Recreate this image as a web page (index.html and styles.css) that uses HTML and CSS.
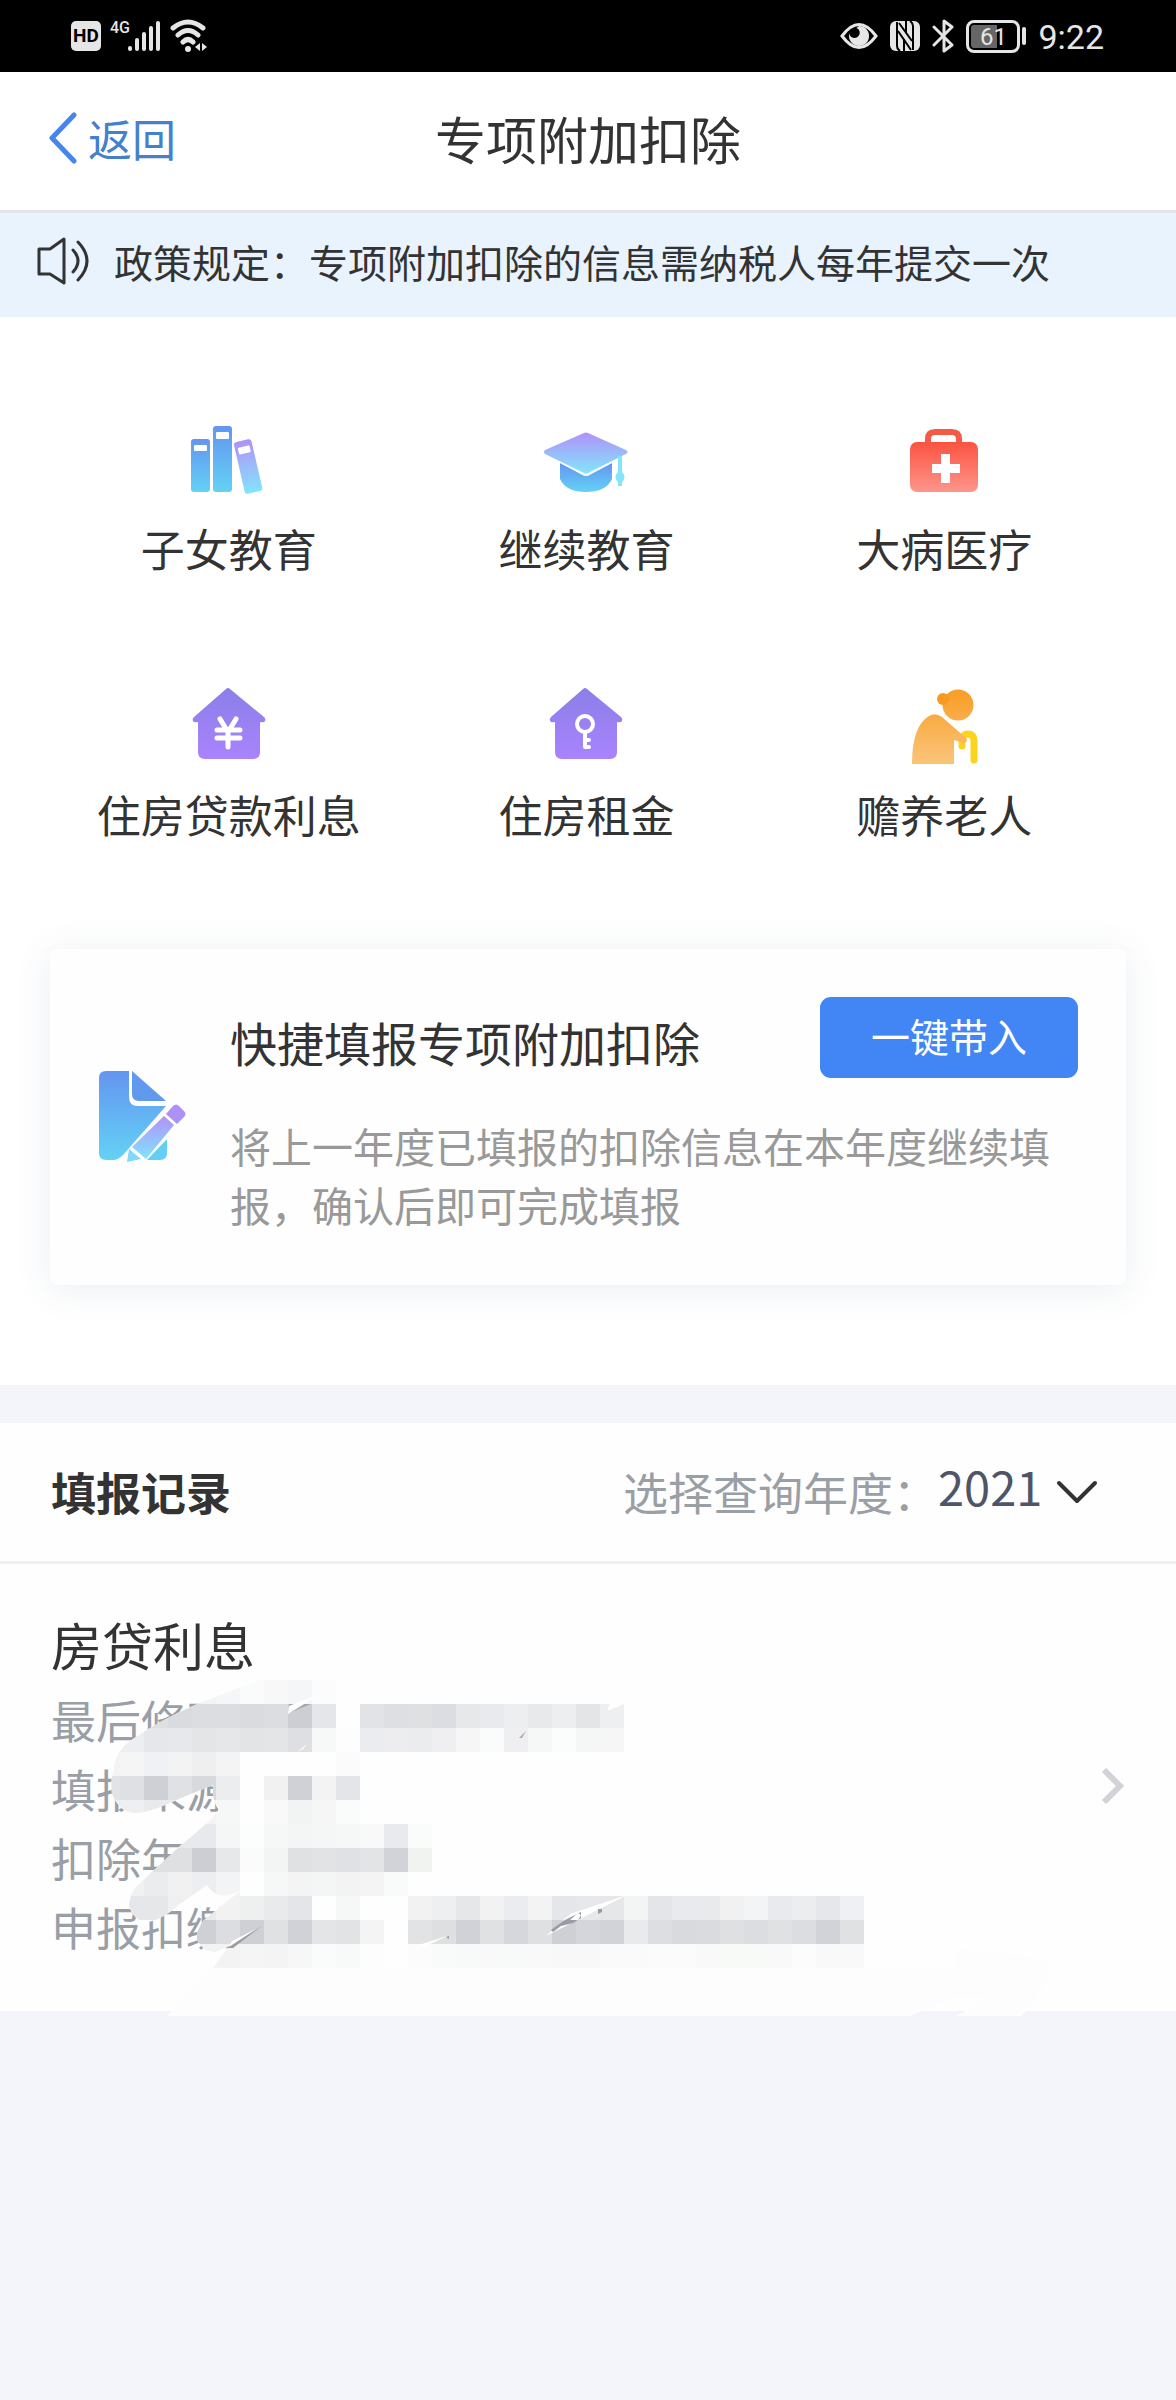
FILE: index.html
```html
<!DOCTYPE html>
<html lang="zh-CN">
<head>
<meta charset="utf-8">
<meta name="viewport" content="width=device-width, initial-scale=1">
<title>专项附加扣除</title>
<link rel="stylesheet" href="styles.css">
</head>
<body>
<div class="status">
  <div class="status-left">
    <span class="hd">HD</span>
    <span class="net">4G</span>
    <svg class="signal" width="34" height="32" viewBox="0 0 34 32" stroke="#e6e6e6" stroke-width="4" stroke-linecap="round"><path d="M3 28v1M10 20v9M17 14v15M24 8v21M31 3v26"/></svg>
    <svg width="38" height="34" viewBox="0 0 38 34" fill="none" stroke="#e6e6e6" stroke-width="5" stroke-linecap="round"><path d="M3 9Q18-3 33 9M8 16Q18 7 28 16M13 23Q18 18 23 23"/><circle cx="18" cy="30" r="3" fill="#e6e6e6" stroke="none"/><path d="M25 28l5-4v8zM37 28l-5-4v8z" fill="#e6e6e6" stroke="none"/></svg>
  </div>
  <div class="status-right">
    <svg width="38" height="28" viewBox="0 0 38 28"><path d="M2 14Q19-9 36 14Q19 37 2 14z" fill="none" stroke="#e6e6e6" stroke-width="3"/><path d="M19 4a10 10 0 1 1-9.500 7a5 5 0 0 0 9 3a5 5 0 0 0-2-8z" fill="#e6e6e6"/></svg>
    <svg width="30" height="30" viewBox="0 0 30 30"><rect width="30" height="30" rx="6" fill="#e6e6e6"/><path d="M7 1v24q0 3 3 5M8 10l13 19M9 2l13 18M23 29V5q0-3-3-5" fill="none" stroke="#000" stroke-width="2"/><path d="M14 18v12M16 0v12" stroke="#000" stroke-width="2"/></svg>
    <svg width="22" height="34" viewBox="0 0 22 34" fill="none" stroke="#e6e6e6" stroke-width="3" stroke-linejoin="round" stroke-linecap="round"><path d="M2 8l18 18-8 6V2l8 6L2 26"/></svg>
    <span class="battery"><span class="battery-box">61</span><span class="battery-tip"></span></span>
    <span class="clock">9:22</span>
  </div>
</div>

<header class="topbar">
  <a class="back" href="#">
    <svg width="28" height="52" viewBox="0 0 28 52" fill="none" stroke="#4585ec" stroke-width="5" stroke-linecap="round" stroke-linejoin="round"><path d="M25 3L3 26l22 23"/></svg>
    <span>返回</span>
  </a>
  <h1>专项附加扣除</h1>
</header>

<p class="notice">
  <svg width="52" height="48" viewBox="0 0 52 48" fill="none" stroke="#333" stroke-width="3" stroke-linejoin="round" stroke-linecap="round"><path d="M2 12h11L27 2v44L13 37H2zM36 13q10 11 0 22M41 5q18 19 0 38"/></svg>
  <span>政策规定：专项附加扣除的信息需纳税人每年提交一次</span>
</p>

<main>
  <section class="panel">
    <nav class="grid">
      <a href="#">
        <svg width="84" height="84" viewBox="0 0 84 84">
          <defs>
            <linearGradient id="blue" x1="0" y1="0" x2="0" y2="1"><stop offset="0" stop-color="#6495f0"/><stop offset="1" stop-color="#63d2f5"/></linearGradient>
            <linearGradient id="violet" x1="0" y1="0" x2="0" y2="1"><stop offset="0" stop-color="#b092f8"/><stop offset="1" stop-color="#82e4fd"/></linearGradient>
            <linearGradient id="purple" x1="0" y1="0" x2="0" y2="1"><stop offset="0" stop-color="#8b7fe8"/><stop offset="1" stop-color="#a983fd"/></linearGradient>
            <linearGradient id="red" x1="0" y1="0" x2="0" y2="1"><stop offset="0" stop-color="#fb5340"/><stop offset="1" stop-color="#fe958c"/></linearGradient>
            <linearGradient id="orange" x1="0" y1="0" x2="0" y2="75" gradientUnits="userSpaceOnUse"><stop offset="0" stop-color="#f99a1f"/><stop offset="1" stop-color="#fac274"/></linearGradient>
          </defs>
          <rect x="4" y="21" width="19" height="53" rx="3" fill="url(#blue)"/>
          <rect x="26" y="8" width="19" height="66" rx="3" fill="url(#blue)"/>
          <g transform="rotate(-13 61 48)"><rect x="52" y="22" width="18" height="53" rx="3" fill="url(#violet)"/><rect x="55" y="28" width="12" height="7" rx="1" fill="#fff"/></g>
          <rect x="7" y="27" width="13" height="6" rx="1" fill="#fff"/><rect x="29" y="14" width="13" height="7" rx="1" fill="#fff"/>
        </svg>
        <span>子女教育</span>
      </a>
      <a href="#">
        <svg width="84" height="84" viewBox="0 0 84 84">
          <path d="M16 45l26 13 26-13v16q-6 13-26 13T16 61z" fill="url(#blue)"/>
          <path d="M42 56L68 42" stroke="#fff" stroke-width="5"/><path d="M42 56L16 42" stroke="#fff" stroke-width="5"/>
          <path d="M40 15q2-1 4 0l38 17q3 2 0 4L44 55q-2 1-4 0L1 36q-2-2 0-4z" fill="url(#violet)"/>
          <path d="M74 38h4v16q5 5 0 10v4h-4v-4q-5-5 0-10z" fill="#82e4fd"/>
        </svg>
        <span>继续教育</span>
      </a>
      <a href="#">
        <svg width="84" height="84" viewBox="0 0 84 84">
          <path d="M26 26v-5q0-7 7-7h17q7 0 7 7v5" fill="none" stroke="#f45a48" stroke-width="6"/>
          <rect x="8" y="24" width="68" height="50" rx="7" fill="url(#red)"/>
          <path d="M39 36h9v10h10v9H48v10h-9V55H30v-9h9z" fill="#fff"/>
        </svg>
        <span>大病医疗</span>
      </a>
      <a href="#">
        <svg width="84" height="84" viewBox="0 0 84 84">
          <path id="house" d="M39 5q2-2 4 0l34 28q2 2 1 4t-5 1v30q0 7-7 7H18q-7 0-7-7V38q-4 1-5-1t1-4z" fill="url(#purple)"/>
          <path d="M33 35l8 13 8-13M30 46h23M30 54h23M41 46v17" fill="none" stroke="#fff" stroke-width="5" stroke-linecap="round"/>
        </svg>
        <span>住房贷款利息</span>
      </a>
      <a href="#">
        <svg width="84" height="84" viewBox="0 0 84 84">
          <use href="#house"/>
          <circle cx="41" cy="40" r="8" fill="none" stroke="#fff" stroke-width="4"/>
          <path d="M41 50v13h4M41 56h4" fill="none" stroke="#fff" stroke-width="4" stroke-linecap="round" stroke-linejoin="round"/>
        </svg>
        <span>住房租金</span>
      </a>
      <a href="#">
        <svg width="84" height="84" viewBox="0 0 84 84">
          <path d="M60 62V56q1-6 6-6 6 0 6 7v19" fill="none" stroke="#fcd31d" stroke-width="7" stroke-linecap="round"/>
          <path d="M10 80q0-38 17-48 6-4 13 1l24 21q2 2 0 4-3 2-6 0l-6-2v24z" fill="url(#orange)"/>
          <circle cx="56" cy="21" r="15.500" fill="url(#orange)"/><circle cx="41" cy="15" r="6" fill="#f99a1f"/>
        </svg>
        <span>赡养老人</span>
      </a>
    </nav>

    <section class="card">
      <svg class="card-icon" width="88" height="92" viewBox="0 0 88 92">
        <path d="M8 1h23v26q0 9 9 9h28L25 85q-5 5-10 5H8q-7 0-7-7V8q0-7 7-7z" fill="url(#blue)"/>
        <path d="M34 1l34 30H41q-7 0-7-7z" fill="#6199ef"/>
        <path d="M69 69v14q0 7-7 7H49z" fill="#63cff5"/>
        <path d="M66 46l10 9-28 34-14-12z" fill="url(#violet)"/>
        <path d="M31 79l12 10-14 3z" fill="#82d8fb"/>
        <path d="M75 36q3-3 6 0l5 5q3 3 0 6l-7 7-11-10z" fill="#ad90f8"/>
      </svg>
      <div class="card-body">
        <div class="card-top">
          <h2>快捷填报专项附加扣除</h2>
          <button type="button">一键带入</button>
        </div>
        <p>将上一年度已填报的扣除信息在本年度继续填报，确认后即可完成填报</p>
      </div>
    </section>
  </section>

  <section class="records">
    <div class="records-head">
      <h2>填报记录</h2>
      <div class="year">
        <label for="year">选择查询年度：</label>
        <select id="year"><option>2021</option></select>
        <svg width="42" height="26" viewBox="0 0 42 26" fill="none" stroke="#333" stroke-width="4" stroke-linecap="round" stroke-linejoin="round"><path d="M3 4l18 18L39 4"/></svg>
      </div>
    </div>
    <a class="record" href="#">
      <div>
        <h3>房贷利息</h3>
        <ul>
          <li>最后修改</li>
          <li>填报来源</li>
          <li>扣除年度</li>
          <li>申报扣缴</li>
        </ul>
      </div>
      <svg class="go" width="24" height="36" viewBox="0 0 24 36" fill="none" stroke="#d2d3d8" stroke-width="6"><path d="M3 2l16 16L3 34"/></svg>
      <svg class="mosaic" width="960" height="420" viewBox="96 1600 960 420" aria-hidden="true">
        <defs>
          <clipPath id="brush"><path d="M264 1678L195 1705Q160 1720 130 1741Q114 1753 114 1770Q110 1780 112 1794Q120 1813 135 1813Q150 1812 165 1805Q190 1794 213 1785Q212 1802 219 1810Q212 1820 180 1846L138 1885Q129 1894 129 1906Q134 1921 147 1922Q160 1921 180 1904L207 1885Q213 1896 226 1896L240 1891L203 1921Q196 1931 197 1940Q204 1953 215 1952L228 1947L213 1968H1000V1600H500Q340 1640 264 1678z"/></clipPath>
        </defs>
        <path d="M213 1968L167 2016H910L957 1996H990L957 2016H1022Q1050 1985 1050 1960L900 1940H240z" fill="#fdfdfd"/>
        <g id="cells" clip-path="url(#brush)"><rect x="96" y="1680" width="860" height="290" fill="#fefefe"/></g>
        <path d="M289 1704h22l-22 9z" fill="#a5a8b0"/><path d="M322 1693L288 1714l1-8z" fill="#fff"/><path d="M297 1752l10-8-4 5z" fill="#fff"/>
        <path d="M262 1926L226 1948l7 0z" fill="#999ca4"/><path d="M256 1929l-27 18 3-6z" fill="#fff"/>
        <path d="M450 1935L412 1952l10-8z" fill="#fff"/><path d="M446 1937l3-1v3z" fill="#999ca4"/>
        <path d="M627 1895L546 1936 570 1914z" fill="#fff"/><path d="M551 1930l12-9 18-9v6l-8 5-12 3-8 6zM598 1909h4v3l-4 2z" fill="#999ca4"/><path d="M570 1920l8-7 3 2-3 5z" fill="#fff"/>
        <path d="M526 1731l-7 7h3z" fill="#a5a8b0"/><path d="M624 1704l-17 7 3-7z" fill="#fff"/>
      </svg>
    </a>
  </section>
</main>
<script src="mosaic.js"></script>
</body>
</html>
```
FILE: styles.css
```css
* { box-sizing: border-box; margin: 0; padding: 0; }
body {
  min-height: 100vh;
  background: #f3f5fa;
  color: #333;
  font-family: "Noto Sans CJK SC", sans-serif;
}
a { color: inherit; text-decoration: none; }
svg { display: block; flex: none; }
h1, h2, h3 { font-weight: 400; }

.status {
  display: flex;
  justify-content: space-between;
  align-items: center;
  height: 72px;
  padding: 0 72px 0 71px;
  background: #000;
  color: #e6e6e6;
  font-family: Roboto, sans-serif;
}
.status-left, .status-right { display: flex; align-items: center; }
.status-left { gap: 9px; }
.status-right { gap: 12px; }
.hd {
  width: 30px;
  border-radius: 5px;
  background: #e6e6e6;
  color: #000;
  font-size: 19px;
  font-weight: 700;
  line-height: 30px;
  text-align: center;
}
.net { align-self: flex-start; font-size: 16px; line-height: 18px; font-weight: 500; }
.signal { margin-left: -12px; }
.battery { display: flex; align-items: center; gap: 2px; }
.battery-box {
  width: 54px;
  height: 33px;
  border: 3px solid #e6e6e6;
  border-radius: 8px;
  background: linear-gradient(90deg, #666 60%, #000 60%) content-box;
  padding: 2px;
  font-size: 24px;
  line-height: 24px;
  text-align: center;
}
.battery-tip { width: 4px; height: 18px; border-radius: 2px; background: #e6e6e6; }
.clock { font-size: 34px; line-height: 40px; padding-top: 2px; }

.topbar {
  display: grid;
  grid-template-columns: 1fr auto 1fr;
  align-items: center;
  min-height: 141px;
  padding: 0 49px 6px;
  border-bottom: 3px solid #e1e4ea;
  background: #fff;
}
.back { display: flex; align-items: center; gap: 11px; color: #4580cc; font-size: 44px; line-height: 60px; }
.topbar h1 { font-size: 51px; line-height: 66px; }

.notice {
  display: flex;
  align-items: center;
  gap: 25px;
  min-height: 104px;
  padding: 0 37px 8px;
  background: #e8f3fe;
  font-size: 39px;
  line-height: 60px;
}

.panel { padding: 101px 50px 100px; background: #fff; }
.grid { display: grid; grid-template-columns: repeat(3, 1fr); gap: 106px 0; padding-right: 3px; }
.grid a {
  display: flex;
  flex-direction: column;
  align-items: center;
  gap: 16px;
  font-size: 44px;
  line-height: 60px;
}

.card {
  display: flex;
  align-items: center;
  gap: 44px;
  margin-top: 105px;
  padding: 48px 48px 51px;
  border-radius: 8px;
  background: #fefefe;
  box-shadow: 0 4px 36px rgba(60, 90, 130, 0.1);
}
.card-body { flex: 1; }
.card-top { display: flex; justify-content: space-between; align-items: flex-end; }
.card h2 { font-size: 47px; line-height: 72px; }
.card button {
  width: 258px;
  height: 81px;
  padding-bottom: 6px;
  border: 0;
  border-radius: 11px;
  background: #4285f4;
  color: #fff;
  font-family: inherit;
  font-size: 39px;
}
.card p { margin-top: 38px; color: #999; font-size: 41px; line-height: 59px; }

.records { margin-top: 38px; background: #fefefe; }
.records-head {
  display: flex;
  justify-content: space-between;
  align-items: center;
  min-height: 141px;
  padding: 0 78px 0 51px;
  border-bottom: 3px solid #f0f0f0;
  font-size: 45px;
}
.records-head h2 { font-size: 45px; font-weight: 700; line-height: 66px; }
.year { display: flex; align-items: center; color: #9a9fa6; line-height: 66px; }
.year select {
  margin-right: 13px;
  padding-bottom: 12px;
  appearance: none;
  border: 0;
  background: none;
  color: #4f5567;
  font-family: inherit;
  font-size: 47px;
  line-height: 66px;
}

.record {
  position: relative;
  display: flex;
  justify-content: space-between;
  align-items: center;
  padding: 47px 51px 50px;
}
.record h3 { font-size: 51px; line-height: 66px; }
.record ul { margin-top: 8px; list-style: none; color: #9a9ea6; font-size: 45px; line-height: 69px; }
.mosaic { position: absolute; left: 96px; top: 36px; }
```
FILE: mosaic.js
```js
// Rows of 24px privacy blocks: [y, first column, colours ("-" leaves a gap)]
const rows = [
  [1680, 8, "f3f4f6 f5f6f8 f9fcfa f8f8f8 f5f6f7 fcfcfc"],
  [1704, 5, "dedfe1 dedfe1 dadbde dbdde0 dcdde0 dadbdf dcdde1 cdced4 e5e6e9 - e2e3e6 dddfe2 dfe0e2 dcdde2 e6e8e9 e9eaed edeef0 e8e9eb edeef0 e4e5e7 eeeff1"],
  [1728, 4, "eceef1 eceef1 e5e7ea e7e8eb e4e5e7 e6e7e9 e2e4e6 e4e5e6 dedfe3 f6f9f8 fdfdfd ebecf0 ededef ebecee efeff2 f6f6f6 f9fcfa efeff2 f6f8f7 fafdfb f5f7f6 f6f6f6"],
  [1752, 4, "f3f4f4 f5f5f5 eff1f5 f3f3f4 efefef f4f4f4 - - fdfefd - fbfbfb"],
  [1776, 4, "e2e3e5 dfe0e3 cfd0d6 dfe1e4 d8d9dd ecedef - f1f1f1 d0d1d6 f3f3f4 e4e5e8"],
  [1800, 4, "edeef0 eeeff1 e9eaec e9eaec f3f4f4 f6f7f7 - f9f9f9 f2f3f3 f5f6f5 fafbfb"],
  [1824, 7, "e8e9ec e8e9ec f5f7f7 fcfdfd f6f8f8 f4f6f5 f5f6f6 f6f7f7 f9f9f9 e9eaed f9fcfa"],
  [1848, 6, "dfe0e2 dfe0e2 cdced3 e7e8ea fafbfa f3f5f5 e0e1e3 e2e3e4 dfe1e4 e2e4e6 d2d3d9 f1f3f1"],
  [1872, 5, "f0f1f2 ebecee f1f1f2 edeef1 f3f4f5 - f6f7f7 f4f4f4 f4f5f5 f3f3f4 f4f4f4 f9fafa"],
  [1896, 5, "e6e7ea e6e7e9 f0f0f1 e9eaec f2f2f2 eeefef e9eaec e4e5e8 - f6f8f7 - - f2f2f2 eeeff1 e5e7e9 f2f2f3 ebecef f3f3f3 e5e6ea e7e8eb e5e7e8 f3f5f4 e4e5e9 e9eaed e9eaec f1f1f1 f3f4f6 e9eaed ecedef e6e7ea eff0f3"],
  [1920, 8, "cfd0d5 dcdde0 cfd0d5 e0e1e3 d1d2d7 e4e5e7 e1e3e5 f4f4f4 - e2e3e5 dedfe1 d1d2d7 e0e1e3 d6d7dc dfe0e2 cfd0d6 d5d6db d2d3d9 e9eaec dcdee1 d9dade dadbdf dfe0e2 dcdde1 e0e1e3 dcdde0 d2d3d8 e0e1e3"],
  [1944, 8, "f3f3f4 f3f3f4 f5f5f6 f4f4f4 f6f7f6 fafcfb f8f9f9 fdfdfd - fcfcfc f9fbfa f8faf9 f9f9f9 f8faf9 f9f9f9 f8f8f8 f8f8f8 fafafa fafafa fbfbfb fbfbfb f9f9f9 f8faf8 f8faf8 f9f9f9 fcfcfc f8f9f8 f9f9f9"]
];
const cells = document.getElementById("cells");
for (const [y, first, colours] of rows) {
  colours.split(" ").forEach((colour, i) => {
    if (colour === "-") return;
    const r = document.createElementNS("http://www.w3.org/2000/svg", "rect");
    r.setAttribute("x", (first + i) * 24);
    r.setAttribute("y", y);
    r.setAttribute("width", 24);
    r.setAttribute("height", 24);
    r.setAttribute("fill", "#" + colour);
    cells.appendChild(r);
  });
}
```
